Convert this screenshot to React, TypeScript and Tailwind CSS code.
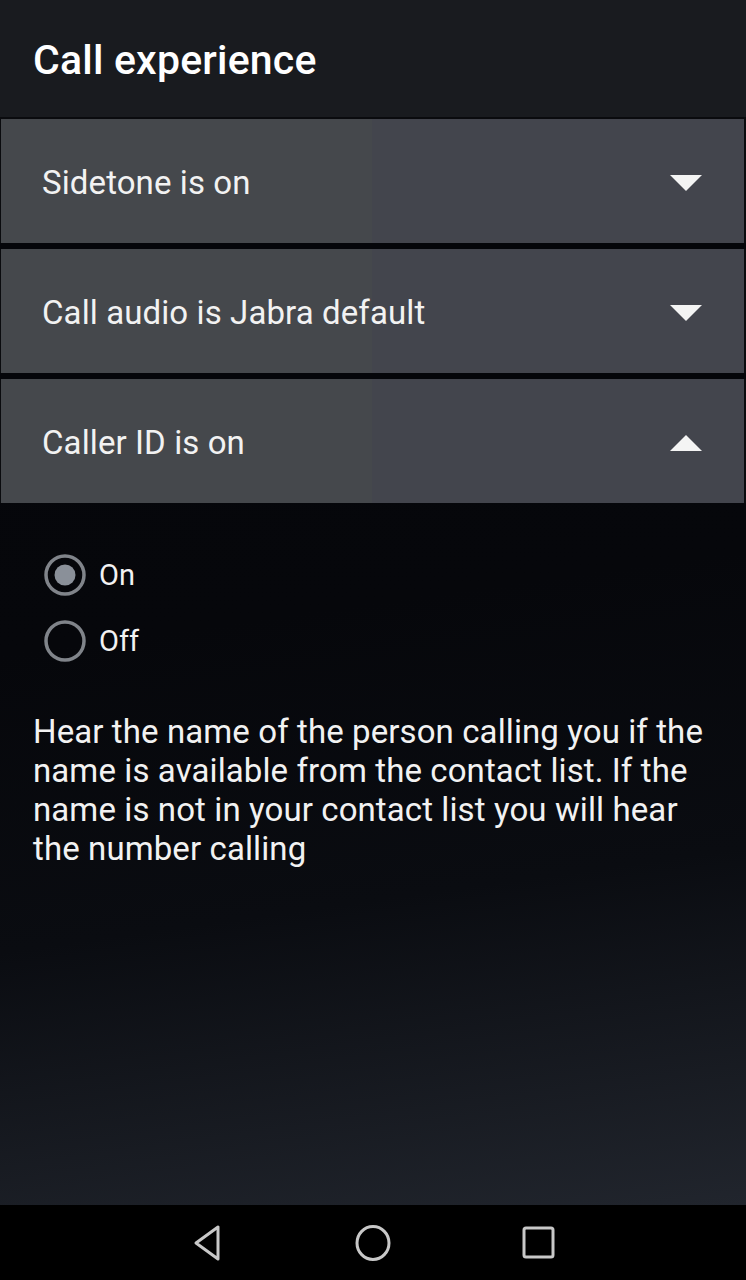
import { useState } from 'react';

const font = { fontFamily: 'Roboto, "Noto Sans", sans-serif' };

interface RowProps {
  label: string;
  open?: boolean;
}

function Row({ label, open }: RowProps) {
  return (
    <div className="h-[124px] flex items-center justify-between pl-[41px] pr-[41px] pt-[3px] bg-[linear-gradient(90deg,#45484c_50%,#43454d_50%)] border-l border-r-2 border-[#0a0b0e]">
      <span className="text-[33px] leading-none text-[#f2f2f2] tracking-[0.1px]">{label}</span>
      <svg width="34" height="18" viewBox="0 0 34 18">
        {open ? (
          <polygon points="1,17 33,17 17,1" fill="#f4f4f4" />
        ) : (
          <polygon points="1,1 33,1 17,17" fill="#f4f4f4" />
        )}
      </svg>
    </div>
  );
}

function Radio({ label, checked, onClick }: { label: string; checked: boolean; onClick: () => void }) {
  return (
    <div className="flex items-center h-[66px] cursor-pointer" onClick={onClick}>
      <svg width="44" height="44" viewBox="0 0 44 44" className="ml-[43px]">
        <circle cx="22" cy="22" r="19" fill="none" stroke="#80848a" strokeWidth="3.5" />
        {checked && <circle cx="22" cy="22" r="10.5" fill="#8a9099" />}
      </svg>
      <span className="ml-[12px] text-[29px] leading-none text-[#f2f2f2]">{label}</span>
    </div>
  );
}

export default function App() {
  const [callerId, setCallerId] = useState(true);

  return (
    <div className="w-[746px] h-[1280px] flex flex-col overflow-hidden bg-black" style={font}>
      {/* Заголовок */}
      <div className="h-[119px] shrink-0 bg-[#191b1f] flex items-center pl-[33px] pt-[4px] border-b-2 border-[#0a0b0e]">
        <h1 className="text-[41px] leading-none font-medium text-white tracking-[0.2px]">Call experience</h1>
      </div>

      <div className="flex-1 flex flex-col bg-[linear-gradient(172deg,#05060a_0%,#06070b_45%,#0a0c11_70%,#21252d_100%)]">
        <div className="flex flex-col gap-[6px] bg-[#05060a]">
          <Row label="Sidetone is on" />
          <Row label="Call audio is Jabra default" />
          <Row label="Caller ID is on" open />
        </div>

        <div className="pt-[39px]">
          <Radio label="On" checked={callerId} onClick={() => setCallerId(true)} />
          <Radio label="Off" checked={!callerId} onClick={() => setCallerId(false)} />
        </div>

        <p className="mt-[38px] px-[33px] text-[33px] leading-[39px] text-[#f2f2f2] tracking-[0.1px]">
          Hear the name of the person calling you if the name is available from the contact list. If the name is not in your contact list you will hear the number calling
        </p>
      </div>

      {/* Навигация */}
      <div className="h-[75px] shrink-0 bg-black flex items-center justify-center gap-[130px]">
        <svg width="34" height="38" viewBox="0 0 34 38">
          <path d="M28 3 L28 35 L6 19 Z" fill="none" stroke="#c8c8c8" strokeWidth="3" strokeLinejoin="round" />
        </svg>
        <svg width="38" height="38" viewBox="0 0 38 38">
          <ellipse cx="19" cy="19" rx="16" ry="16.5" fill="none" stroke="#c8c8c8" strokeWidth="3" />
        </svg>
        <svg width="34" height="34" viewBox="0 0 34 34">
          <rect x="2" y="2" width="29" height="29" rx="2" fill="none" stroke="#c8c8c8" strokeWidth="3" />
        </svg>
      </div>
    </div>
  );
}
